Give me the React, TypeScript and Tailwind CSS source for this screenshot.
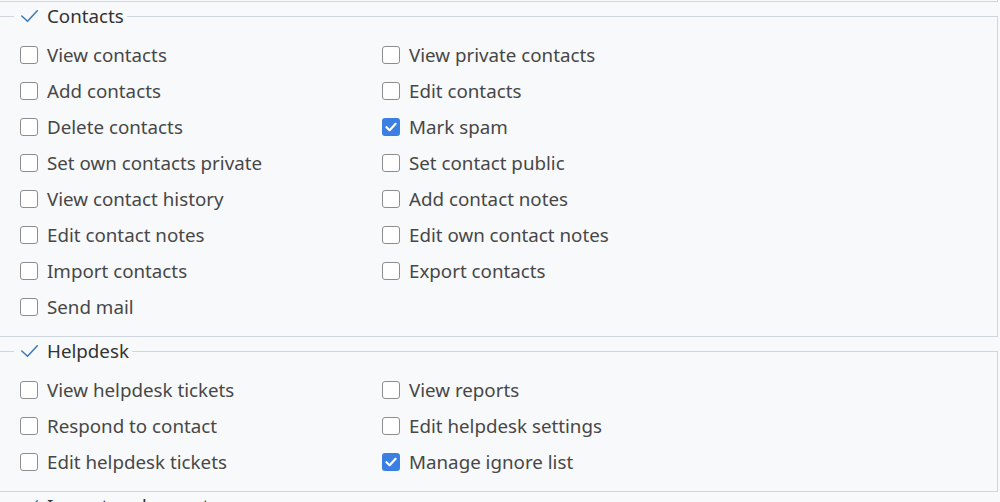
import React from "react";

type Item = { label: string; checked?: boolean };

const contacts: Item[] = [
  { label: "View contacts" },
  { label: "View private contacts" },
  { label: "Add contacts" },
  { label: "Edit contacts" },
  { label: "Delete contacts" },
  { label: "Mark spam", checked: true },
  { label: "Set own contacts private" },
  { label: "Set contact public" },
  { label: "View contact history" },
  { label: "Add contact notes" },
  { label: "Edit contact notes" },
  { label: "Edit own contact notes" },
  { label: "Import contacts" },
  { label: "Export contacts" },
  { label: "Send mail" },
];

const helpdesk: Item[] = [
  { label: "View helpdesk tickets" },
  { label: "View reports" },
  { label: "Respond to contact" },
  { label: "Edit helpdesk settings" },
  { label: "Edit helpdesk tickets" },
  { label: "Manage ignore list", checked: true },
];

function Check() {
  return (
    <svg width="17" height="12" viewBox="0 0 17 12" className="shrink-0">
      <polyline
        points="0.8,6 6.5,11.2 16.3,0.8"
        fill="none"
        stroke="#3a77b6"
        strokeWidth="1.5"
        strokeLinecap="round"
        strokeLinejoin="round"
      />
    </svg>
  );
}

function Box({ checked }: { checked?: boolean }) {
  if (checked) {
    return (
      <span className="w-[18px] h-[18px] rounded-[3px] bg-[#3b7fe3] flex items-center justify-center shrink-0">
        <svg width="12" height="10" viewBox="0 0 12 10">
          <polyline
            points="1.5,5.2 4.6,8.2 10.6,1.8"
            fill="none"
            stroke="#ffffff"
            strokeWidth="2.2"
            strokeLinecap="round"
            strokeLinejoin="round"
          />
        </svg>
      </span>
    );
  }
  return (
    <span className="w-[18px] h-[18px] rounded-[3px] border-[1.5px] border-[#8d8d8d] bg-white shrink-0" />
  );
}

function Group({ title, items }: { title: string; items: Item[] }) {
  return (
    <fieldset className="-ml-[2px] mt-[2px] w-[1000px] border border-[#cfd6df] pl-[15px] pr-0 pt-[9px] pb-[11px]">
      <legend className="pl-[7px] pr-[3px] h-[24px] leading-[24px] flex items-center gap-[9px] text-[18.75px] text-[#333]">
        <Check />
        <span>{title}</span>
      </legend>
      <div className="grid grid-cols-[362px_1fr] pl-[6px]">
        {items.map((it) => (
          <label key={it.label} className="h-[36px] flex items-center gap-[9px] text-[18.75px] text-[#474747]">
            <Box checked={it.checked} />
            <span>{it.label}</span>
          </label>
        ))}
      </div>
    </fieldset>
  );
}

export default function App() {
  return (
    <div
      className="w-[1000px] h-[502px] overflow-hidden bg-[#f8f9fb]"
      style={{ fontFamily: '"Noto Sans", "Open Sans", sans-serif' }}
    >
      <div className="-ml-[2px] w-[1000px] h-[2px] border-b border-x border-[#cfd6df]" />
      <Group title="Contacts" items={contacts} />
      <Group title="Helpdesk" items={helpdesk} />
      <Group title="Import and export" items={[]} />
    </div>
  );
}
